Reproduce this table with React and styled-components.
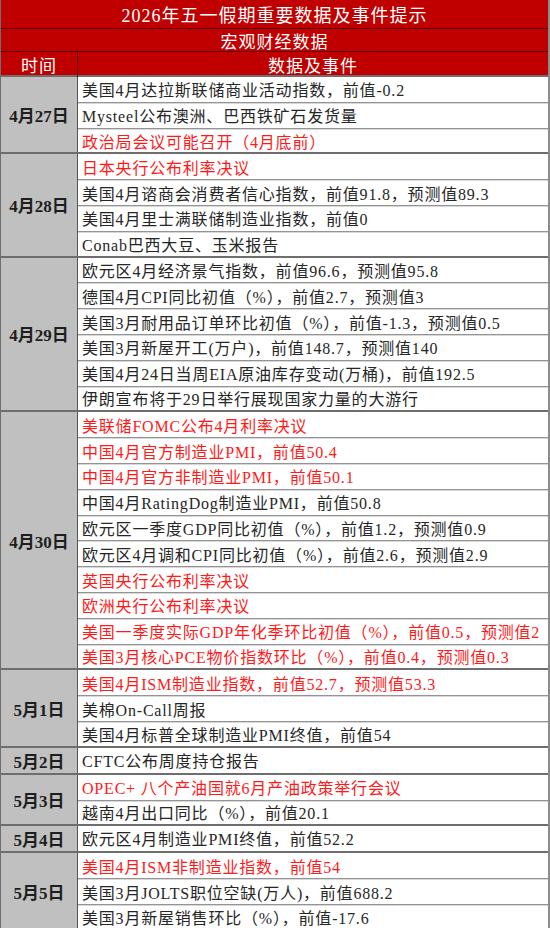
import React from 'react';
import styled, { createGlobalStyle } from 'styled-components';

const GlobalStyle = createGlobalStyle`
    body {
        margin: 0;
        background: #ffffff;
        font-family: "Liberation Serif", "Noto Sans CJK SC", serif;
    }
`;

const Sheet = styled.div`
    width: 550px;
    box-sizing: border-box;
    border-right: 2px solid #8c8c8c;
    border-bottom: 2px solid #8c8c8c;
    border-left: 1px solid #6e6e6e;
`;

const Banner = styled.div`
    display: flex;
    align-items: center;
    justify-content: center;
    height: ${props => props.h}px;
    box-sizing: border-box;
    border-bottom: 1px solid #5a0000;
    background: #c00000;
    color: #ffffff;
    font-size: ${props => props.size}px;
    letter-spacing: 1px;
`;

const HeadRow = styled.div`
    display: grid;
    grid-template-columns: 77px 1fr;
    height: 23px;
    background: #c00000;
    color: #ffffff;
    font-size: 17px;
    letter-spacing: 1px;
`;

const HeadCell = styled.div`
    display: flex;
    align-items: center;
    justify-content: center;
    border-right: ${props => (props.first ? '1px solid #5a0000' : 'none')};
`;

const Group = styled.div`
    display: grid;
    grid-template-columns: 77px 1fr;
    border-top: 2px solid #6e6e6e;
`;

const DateCell = styled.div`
    display: flex;
    align-items: center;
    justify-content: center;
    grid-row: 1 / span ${props => props.span};
    background: #c0c0c0;
    border-right: 1px solid #555555;
    color: #1e1e1e;
    font-size: 17px;
    font-weight: bold;
`;

const ItemCell = styled.div`
    display: flex;
    align-items: center;
    height: ${props => (props.last ? 23.8 : 24.8)}px;
    padding-left: 4px;
    grid-column: 2;
    border-bottom: ${props => (props.last ? 'none' : '1px solid #949494')};
    box-shadow: ${props => (props.last ? 'none' : '0 1px 0 #d8d8d8')};
    color: ${props => (props.red ? '#ff1a1a' : '#262626')};
    font-size: 16px;
    letter-spacing: 0.8px;
    white-space: nowrap;
    overflow: hidden;
`;

const schedule = [
    {
        date: '4月27日',
        items: [
            ['美国4月达拉斯联储商业活动指数，前值-0.2'],
            ['Mysteel公布澳洲、巴西铁矿石发货量'],
            ['政治局会议可能召开（4月底前）', true],
        ],
    },
    {
        date: '4月28日',
        items: [
            ['日本央行公布利率决议', true],
            ['美国4月谘商会消费者信心指数，前值91.8，预测值89.3'],
            ['美国4月里士满联储制造业指数，前值0'],
            ['Conab巴西大豆、玉米报告'],
        ],
    },
    {
        date: '4月29日',
        items: [
            ['欧元区4月经济景气指数，前值96.6，预测值95.8'],
            ['德国4月CPI同比初值（%），前值2.7，预测值3'],
            ['美国3月耐用品订单环比初值（%），前值-1.3，预测值0.5'],
            ['美国3月新屋开工(万户)，前值148.7，预测值140'],
            ['美国4月24日当周EIA原油库存变动(万桶)，前值192.5'],
            ['伊朗宣布将于29日举行展现国家力量的大游行'],
        ],
    },
    {
        date: '4月30日',
        items: [
            ['美联储FOMC公布4月利率决议', true],
            ['中国4月官方制造业PMI，前值50.4', true],
            ['中国4月官方非制造业PMI，前值50.1', true],
            ['中国4月RatingDog制造业PMI，前值50.8'],
            ['欧元区一季度GDP同比初值（%），前值1.2，预测值0.9'],
            ['欧元区4月调和CPI同比初值（%），前值2.6，预测值2.9'],
            ['英国央行公布利率决议', true],
            ['欧洲央行公布利率决议', true],
            ['美国一季度实际GDP年化季环比初值（%），前值0.5，预测值2', true],
            ['美国3月核心PCE物价指数环比（%），前值0.4，预测值0.3', true],
        ],
    },
    {
        date: '5月1日',
        items: [
            ['美国4月ISM制造业指数，前值52.7，预测值53.3', true],
            ['美棉On-Call周报'],
            ['美国4月标普全球制造业PMI终值，前值54'],
        ],
    },
    {
        date: '5月2日',
        items: [['CFTC公布周度持仓报告']],
    },
    {
        date: '5月3日',
        items: [
            ['OPEC+ 八个产油国就6月产油政策举行会议', true],
            ['越南4月出口同比（%），前值20.1'],
        ],
    },
    {
        date: '5月4日',
        items: [['欧元区4月制造业PMI终值，前值52.2']],
    },
    {
        date: '5月5日',
        items: [
            ['美国4月ISM非制造业指数，前值54', true],
            ['美国3月JOLTS职位空缺(万人)，前值688.2'],
            ['美国3月新屋销售环比（%），前值-17.6'],
        ],
    },
];

const App = () => (
    <>
        <GlobalStyle />
        <Sheet>
            <Banner h={29} size={18}>2026年五一假期重要数据及事件提示</Banner>
            <Banner h={23} size={17}>宏观财经数据</Banner>
            <HeadRow>
                <HeadCell first>时间</HeadCell>
                <HeadCell>数据及事件</HeadCell>
            </HeadRow>
            {schedule.map(group => (
                <Group key={group.date}>
                    <DateCell span={group.items.length}>{group.date}</DateCell>
                    {group.items.map(([text, red], i) => (
                        <ItemCell key={text} red={red} last={i === group.items.length - 1}>
                            {text}
                        </ItemCell>
                    ))}
                </Group>
            ))}
        </Sheet>
    </>
);

export default App;
